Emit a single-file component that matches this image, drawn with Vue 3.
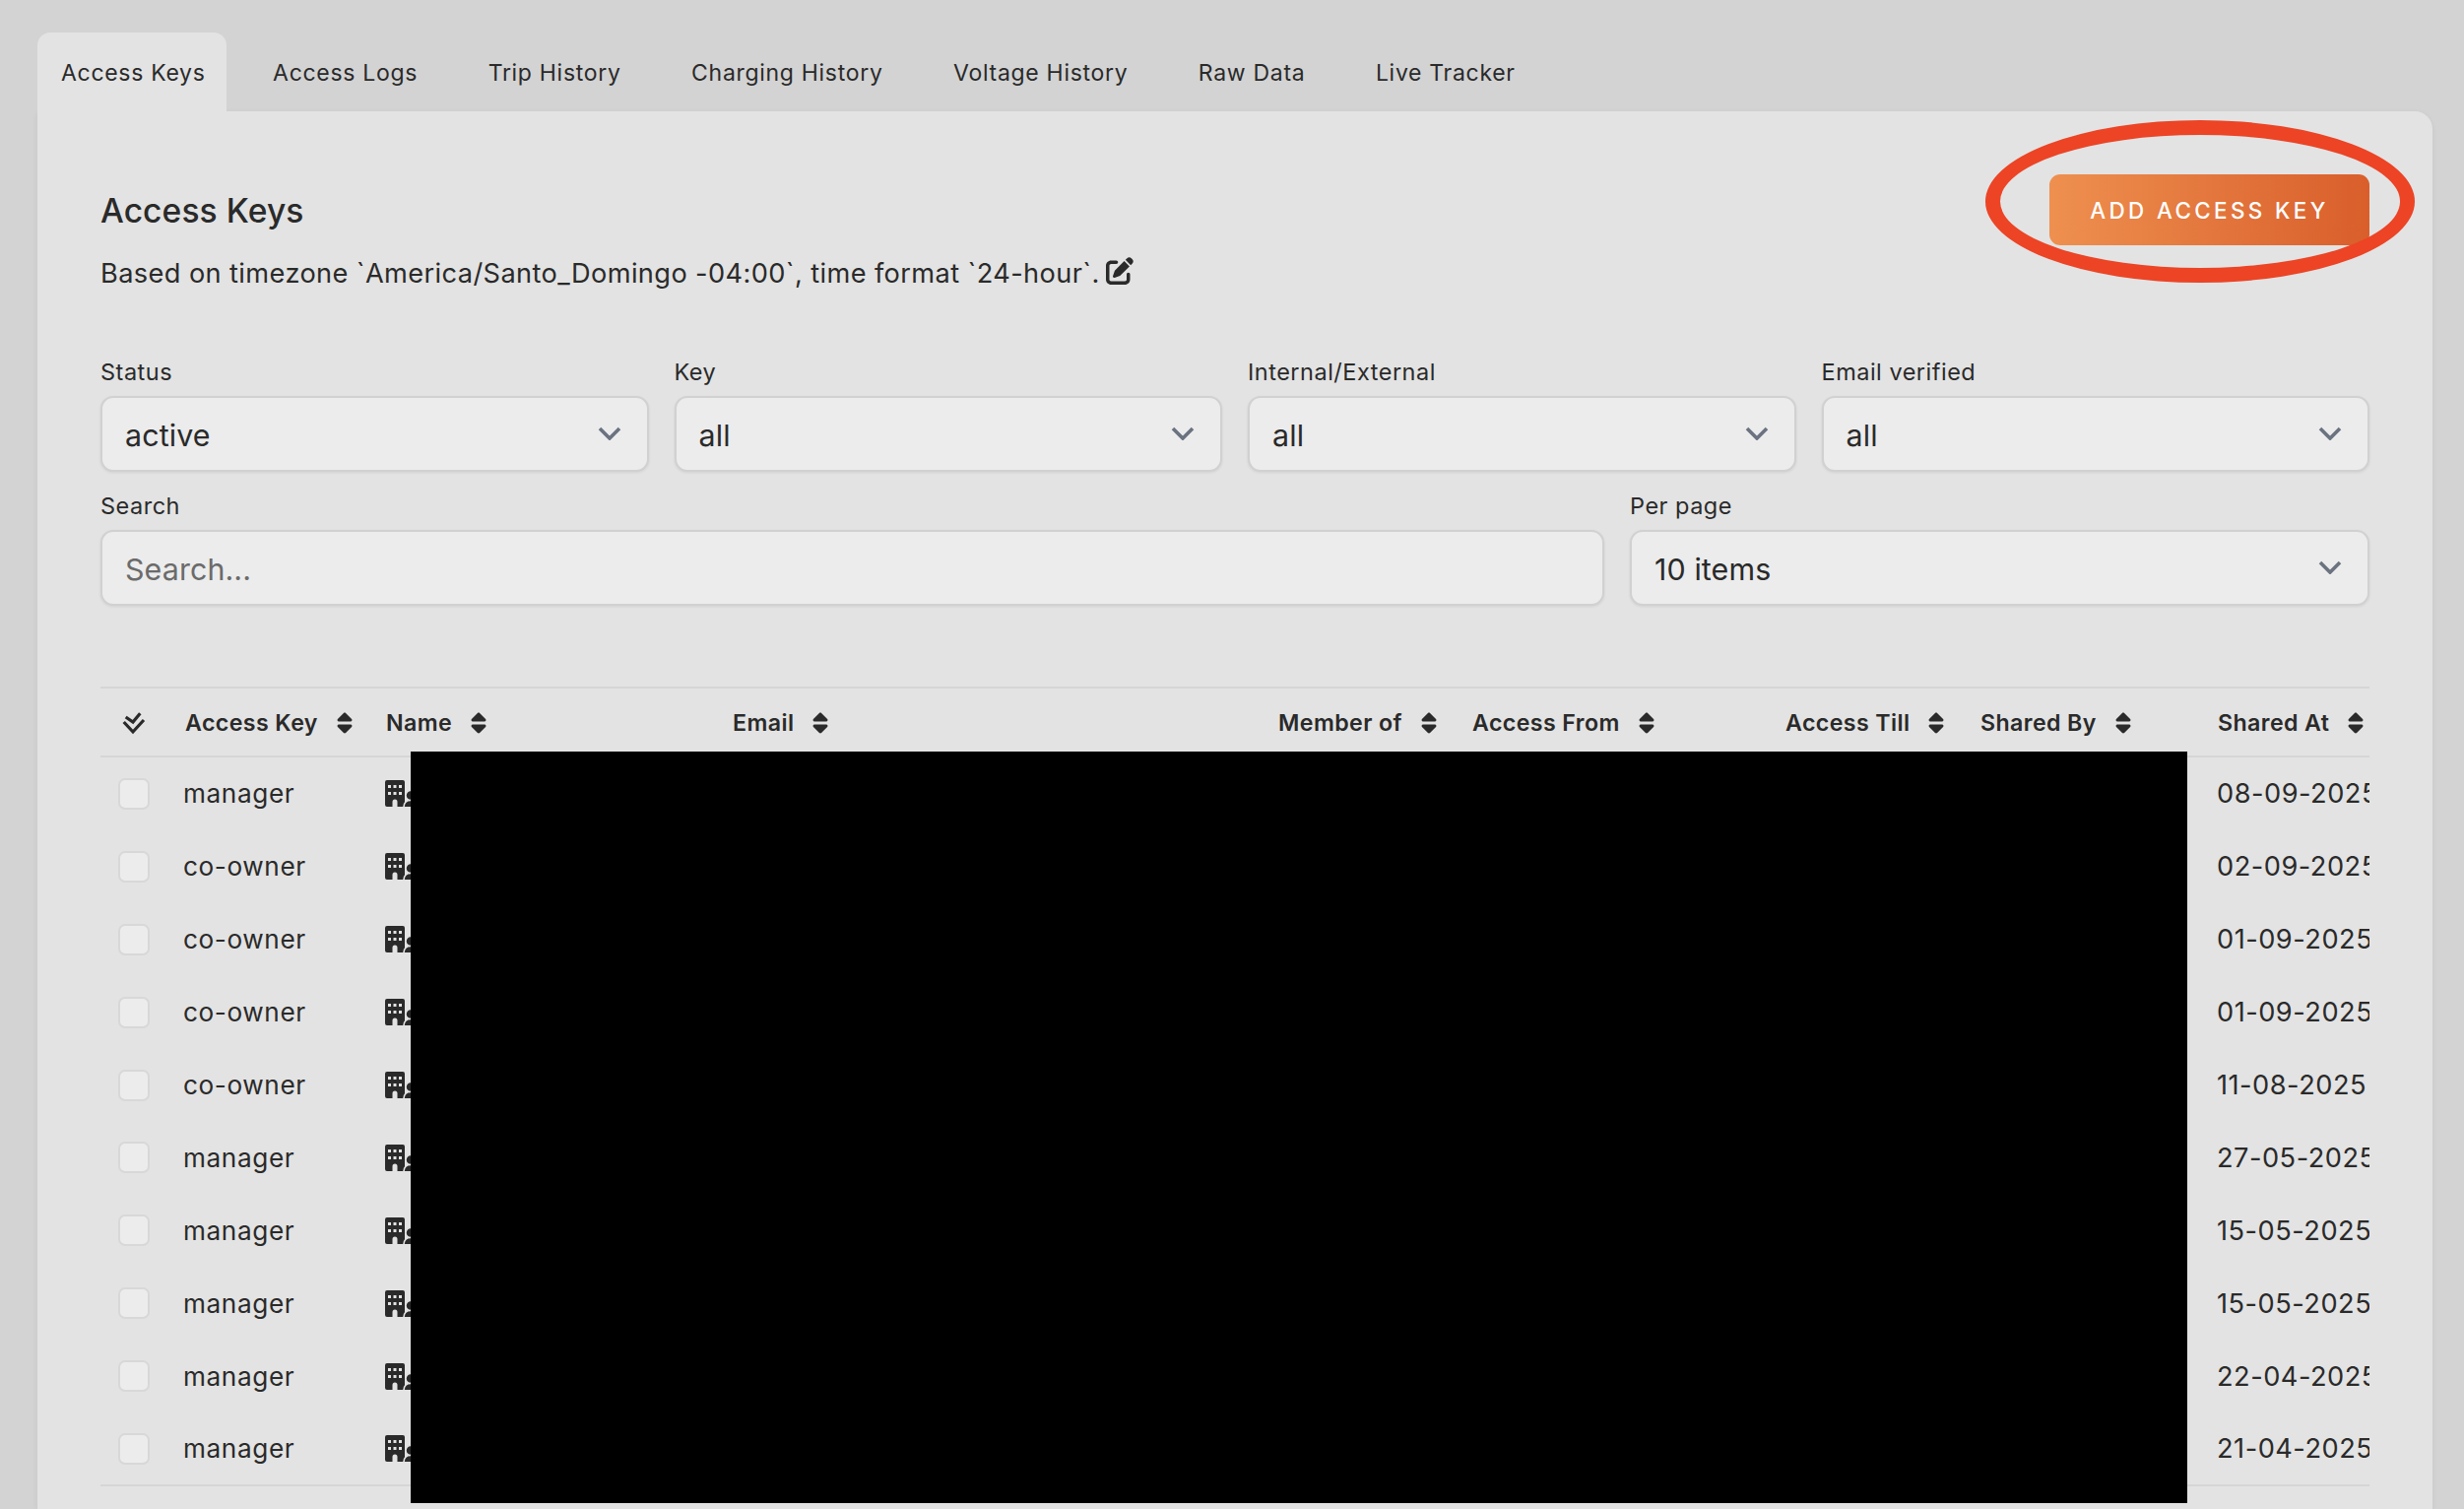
<script setup>
const tabs = ['Access Keys', 'Access Logs', 'Trip History', 'Charging History', 'Voltage History', 'Raw Data', 'Live Tracker']
const topFilters = [
  { label: 'Status', value: 'active' },
  { label: 'Key', value: 'all' },
  { label: 'Internal/External', value: 'all' },
  { label: 'Email verified', value: 'all' }
]
const columns = ['Access Key', 'Name', 'Email', 'Member of', 'Access From', 'Access Till', 'Shared By', 'Shared At']
const rows = [
  ['manager', '08-09-2025'],
  ['co-owner', '02-09-2025'],
  ['co-owner', '01-09-2025'],
  ['co-owner', '01-09-2025'],
  ['co-owner', '11-08-2025'],
  ['manager', '27-05-2025'],
  ['manager', '15-05-2025'],
  ['manager', '15-05-2025'],
  ['manager', '22-04-2025'],
  ['manager', '21-04-2025']
]
</script>

<template>
  <div class="page">
    <nav class="tabs">
      <a v-for="(t, i) in tabs" :key="t" class="tab" :class="{ active: i === 0 }">{{ t }}</a>
    </nav>
    <main class="card">
      <header class="head">
        <div>
          <h1 class="title">Access Keys</h1>
          <p class="sub">
            Based on timezone `America/Santo_Domingo -04:00`, time format `24-hour`.
            <svg class="edit" viewBox="0 0 512 512"><path d="M471.6 21.7c-21.9-21.9-57.3-21.9-79.2 0L362.3 51.7l97.9 97.9 30.1-30.1c21.9-21.9 21.9-57.3 0-79.2L471.6 21.7zm-299.2 220c-6.1 6.1-10.8 13.6-13.5 21.9l-29.6 88.8c-2.9 8.6-.6 18.1 5.8 24.6s15.9 8.7 24.6 5.8l88.8-29.6c8.2-2.7 15.7-7.4 21.9-13.5L437.7 172.3 339.7 74.3 172.4 241.7zM96 64C43 64 0 107 0 160V416c0 53 43 96 96 96H352c53 0 96-43 96-96V320c0-17.7-14.3-32-32-32s-32 14.3-32 32v96c0 17.7-14.3 32-32 32H96c-17.7 0-32-14.3-32-32V160c0-17.7 14.3-32 32-32h96c17.7 0 32-14.3 32-32s-14.3-32-32-32H96z"/></svg>
          </p>
        </div>
        <button class="add">ADD ACCESS KEY</button>
      </header>

      <section class="filters four">
        <label v-for="f in topFilters" :key="f.label" class="field">
          <span class="label">{{ f.label }}</span>
          <span class="control">
            <span>{{ f.value }}</span>
            <svg class="chev" viewBox="0 0 24 14"><path d="M2 2l10 10L22 2" /></svg>
          </span>
        </label>
      </section>
      <section class="filters two">
        <label class="field">
          <span class="label">Search</span>
          <input class="control" placeholder="Search..." />
        </label>
        <label class="field">
          <span class="label">Per page</span>
          <span class="control">
            <span>10 items</span>
            <svg class="chev" viewBox="0 0 24 14"><path d="M2 2l10 10L22 2" /></svg>
          </span>
        </label>
      </section>

      <section class="table">
        <div class="row hrow">
          <div class="cell checkcol">
            <svg class="dbl" viewBox="0 0 24 24"><path d="M1.7 11l9.3 10L22 9M3.700 6L11 11l7.300-8.700" /></svg>
          </div>
          <div v-for="c in columns" :key="c" class="cell hcell">
            <span>{{ c }}</span>
            <svg class="sort" viewBox="0 0 320 512"><path d="M137.4 41.4c12.5-12.5 32.8-12.5 45.3 0l128 128c9.2 9.2 11.9 22.9 6.9 34.9s-16.6 19.8-29.6 19.8H32c-12.9 0-24.6-7.8-29.6-19.8s-2.2-25.7 6.9-34.9l128-128zm0 429.3l-128-128c-9.2-9.2-11.9-22.9-6.9-34.9s16.600-19.8 29.6-19.8H288c12.900 0 24.600 7.8 29.600 19.8s2.200 25.700-6.900 34.900l-128 128c-12.500 12.500-32.800 12.500-45.300 0z"/></svg>
          </div>
        </div>
        <div v-for="(r, i) in rows" :key="i" class="row brow">
          <div class="cell checkcol"><span class="box"></span></div>
          <div class="cell">{{ r[0] }}</div>
          <div class="cell">
            <svg class="bld" viewBox="0 0 34 27">
              <path fill-rule="evenodd" d="M2 0h16a2 2 0 0 1 2 2v23a2 2 0 0 1-2 2h-5.500v-5a2.500 2.500 0 0 0-5 0v5H2a2 2 0 0 1-2-2V2a2 2 0 0 1 2-2zM3 5v3h3V5zM8.500 5v3h3V5zM14 5v3h3V5zM3 12v3h3v-3zM8.500 12v3h3v-3zM14 12v3h3v-3z"/>
              <circle class="person" cx="26" cy="15.500" r="5"/>
              <path class="person" d="M19 28c0-5 2.500-7.500 7-7.500s7 2.500 7 7.500z"/>
            </svg>
          </div>
          <div class="cell"></div><div class="cell"></div><div class="cell"></div>
          <div class="cell"></div><div class="cell"></div>
          <div class="cell date">{{ r[1] }}</div>
        </div>
      </section>
    </main>
    <div class="redact"></div>
    <div class="ring"></div>
  </div>
</template>

<style>
html, body { background: #d3d3d3; }
</style>

<style scoped>
.page {
  position: relative;
  width: 2502px;
  height: 1532px;
  overflow: hidden;
  box-sizing: border-box;
  padding: 33px 32px 0 38px;
  background: #d3d3d3;
  color: #2a2a2a;
  font-family: Inter, "Noto Sans", sans-serif;
}
.tabs { display: flex; gap: 23.500px; height: 80px; }
.tab {
  padding: 0 24px;
  height: 80px;
  line-height: 82px;
  font-size: 23px;
  letter-spacing: 0.700px;
  border-radius: 13px 13px 0 0;
}
.tab.active { background: #e3e3e3; padding-right: 21px; }
.card {
  box-sizing: border-box;
  height: 1419px;
  padding: 64px 64px 0;
  background: #e3e3e3;
  border-radius: 0 18px 0 0;
  box-shadow: 0 2px 6px rgba(0, 0, 0, 0.06);
}
.head { display: flex; justify-content: space-between; align-items: flex-start; }
.title { margin: 0; font-size: 33.600px; line-height: 73px; font-weight: 500; letter-spacing: 0.100px; }
.sub { margin: 8px 0 0; font-size: 27.200px; line-height: 40px; display: flex; align-items: center; gap: 6px; letter-spacing: 0.390px; }
.edit { width: 28px; height: 28px; fill: #2a2a2a; margin-top: -6px; }
.add {
  width: 325px;
  height: 72px;
  border: 0;
  border-radius: 11px;
  color: #fff;
  background: linear-gradient(90deg, #ee904f, #d95e2b);
  font: 500 22.400px Inter, sans-serif;
  letter-spacing: 3.400px;
}
.filters { display: grid; gap: 26px; }
.four { grid-template-columns: repeat(4, 1fr); margin-top: 66px; }
.two { grid-template-columns: 1527px 751px; margin-top: 21px; }
.field { display: flex; flex-direction: column; gap: 10px; }
.label { font-size: 23.500px; line-height: 28px; letter-spacing: 0.500px; }
.control {
  box-sizing: border-box;
  width: 100%;
  height: 77px;
  display: flex;
  align-items: center;
  justify-content: space-between;
  padding: 2px 26px 0 23px;
  background: #ececec;
  border: 2px solid #d1d1d1;
  border-radius: 13px;
  box-shadow: 0 1px 3px rgba(0, 0, 0, 0.08);
  font: 400 30.400px Inter, sans-serif;
  letter-spacing: 0.100px;
  color: #2a2a2a;
  outline: none;
}
input.control::placeholder { color: #6b6b6b; opacity: 1; }
.chev { width: 24px; height: 14px; fill: none; stroke: #6b7280; stroke-width: 3.600; margin-top: -3px; }
.table { margin-top: 82px; width: 2304px; overflow: hidden; }
.row {
  display: grid;
  grid-template-columns: 84px 206px 352px 554px 197px 318px 198px 241px 154px;
}
.hrow {
  height: 72px;
  box-sizing: border-box;
  padding-top: 2px;
  border-top: 2px solid #d6d6d6;
  border-bottom: 2px solid #d6d6d6;
}
.brow { height: 73.900px; }
.brow:last-child { border-bottom: 2px solid #d6d6d6; box-sizing: content-box; height: 73px; }
.cell {
  display: flex;
  align-items: center;
  white-space: nowrap;
  min-width: 0;
  font-size: 26.200px;
  letter-spacing: 0.600px;
}
.hcell { font-size: 23.200px; font-weight: 600; gap: 19px; letter-spacing: 0.400px; }
.hcell:nth-child(2) span { margin-left: 2px; }
.checkcol { justify-content: center; padding-right: 16px; }
.dbl { width: 24px; height: 24px; fill: none; stroke: #2a2a2a; stroke-width: 3.200; }
.sort { width: 16px; height: 24px; flex: none; fill: #2a2a2a; }
.box {
  box-sizing: border-box;
  width: 32px;
  height: 32px;
  background: #ececec;
  border: 2px solid #d8d8d8;
  border-radius: 7px;
}
.bld { width: 34px; height: 27px; fill: #2a2a2a; flex: none; margin-left: -1px; }
.person { stroke: #e3e3e3; stroke-width: 1.500; }
.date { margin-left: -1px; font-size: 27.200px; letter-spacing: 0.500px; }
.redact {
  position: absolute;
  left: 417px;
  top: 763px;
  width: 1804px;
  height: 763px;
  background: #000;
}
.ring {
  position: absolute;
  left: 2016px;
  top: 122px;
  width: 436px;
  height: 165px;
  box-sizing: border-box;
  border: 15px solid #ec4425;
  border-radius: 50%;
}
</style>
